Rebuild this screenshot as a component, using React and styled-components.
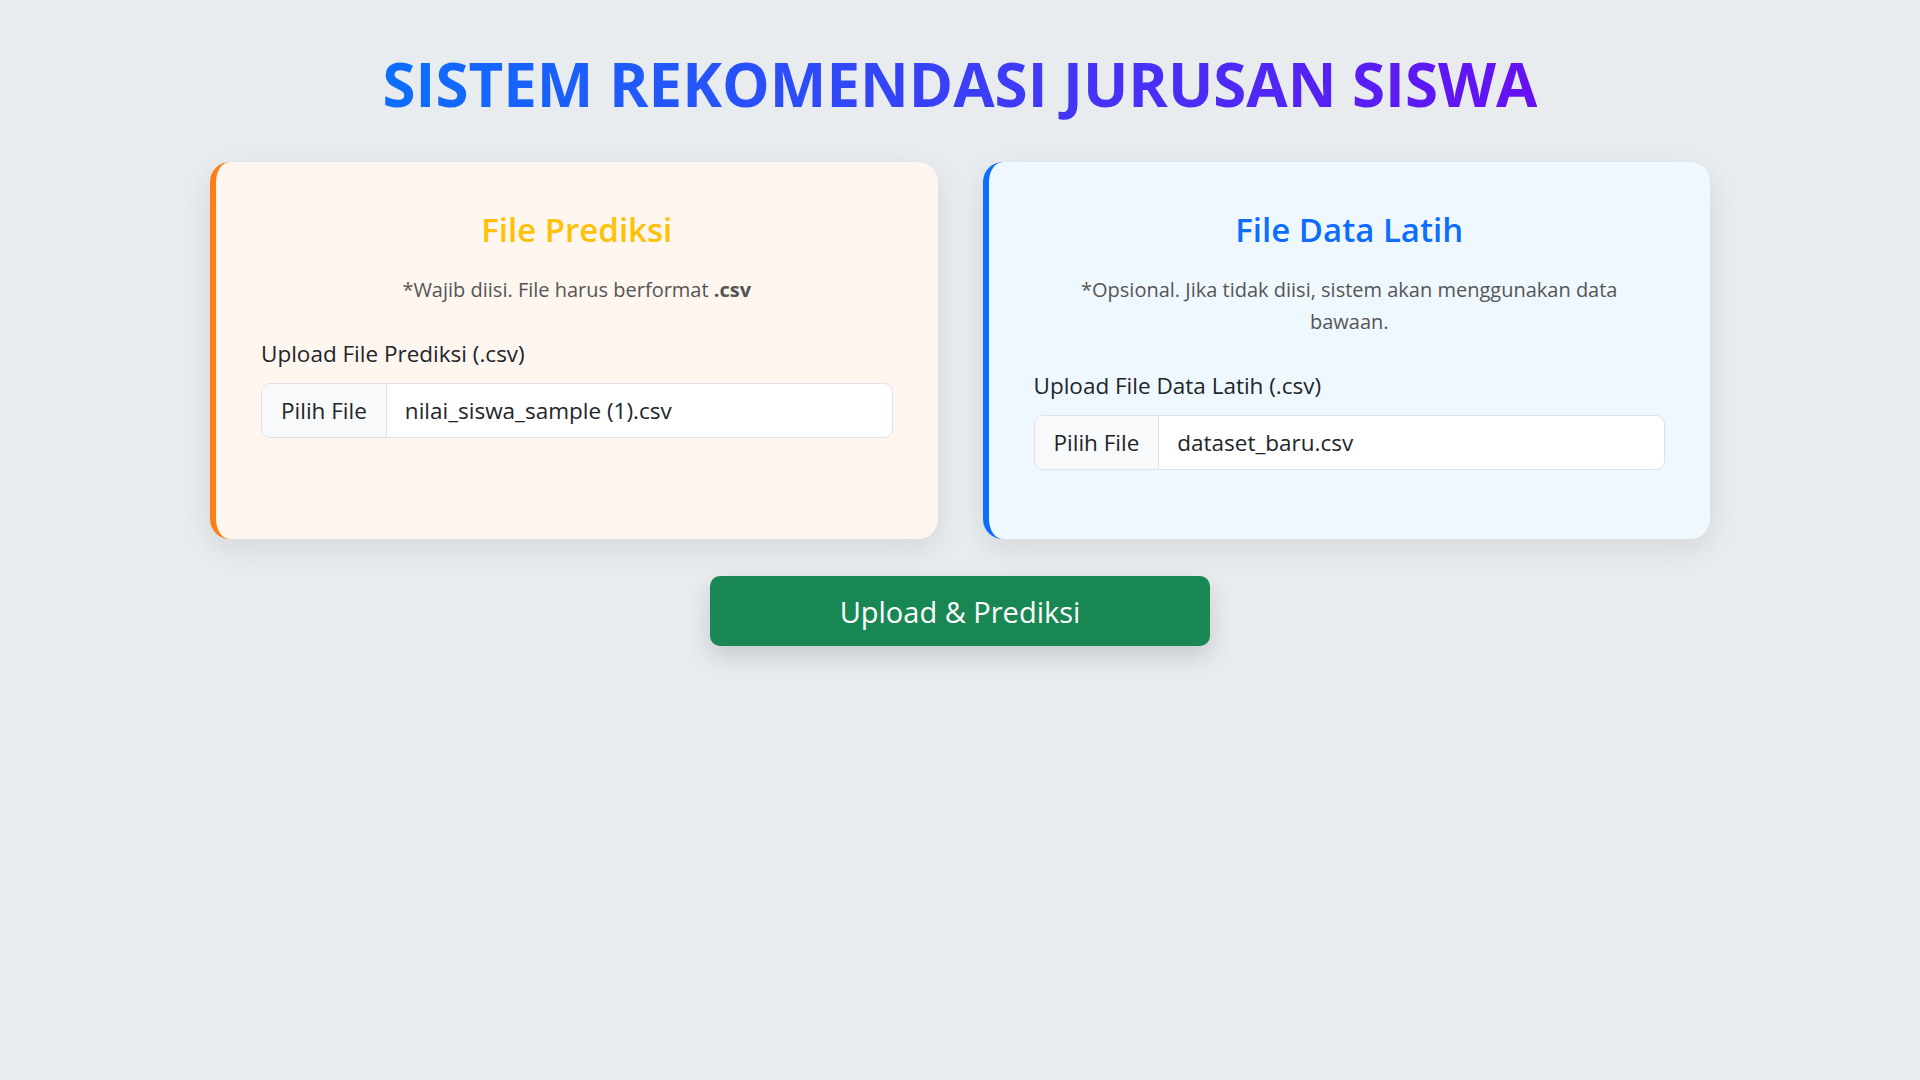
import React from 'react';
import styled, { createGlobalStyle } from 'styled-components';

const GlobalStyle = createGlobalStyle`
  body {
    margin: 0;
    background-color: #e9ecef;
    font-family: 'Open Sans', 'Noto Sans', sans-serif;
    color: #212529;
  }
`

const Page = styled.div`
  min-height: 100vh;
  display: flex;
  flex-direction: column;
  align-items: center;
  padding-top: 48px;
  box-sizing: border-box;
`
const Title = styled.h1`
  margin: 0 0 42px 0;
  font-size: 60px;
  line-height: 72px;
  font-weight: 700;
  background: linear-gradient(90deg, #0d6efd, #6610f2);
  -webkit-background-clip: text;
  background-clip: text;
  color: transparent;
`
const CardRow = styled.div`
  width: 1500px;
  display: flex;
  gap: 45px;
  align-items: stretch;
`
const Card = styled.section`
  flex: 1;
  box-sizing: border-box;
  padding: 47px 45px 69px 45px;
  background-color: ${props => props.bg};
  border-left: 6px solid ${props => props.accent};
  border-radius: 20px;
  box-shadow: 0 10px 30px rgba(0, 0, 0, 0.09);
  display: flex;
  flex-direction: column;
`
const CardTitle = styled.h3`
  margin: 0 0 23px 0;
  text-align: center;
  font-size: 33px;
  line-height: 42px;
  font-weight: 600;
  color: ${props => props.color};
`
const Note = styled.p`
  margin: 0 0 33px 0;
  padding: 0 ${props => props.inset || 0}px;
  text-align: center;
  font-size: 20px;
  line-height: 32px;
  color: #555;
  b {
    font-weight: 700;
  }
`
const Label = styled.label`
  display: block;
  margin-bottom: 14px;
  font-size: 22.5px;
  line-height: 30px;
`
const InputGroup = styled.div`
  display: flex;
  height: 55px;
  box-sizing: border-box;
  border: 1px solid #dee2e6;
  border-radius: 9px;
  background-color: #fff;
  overflow: hidden;
  font-size: 22.5px;
`
const FileButton = styled.span`
  display: flex;
  align-items: center;
  padding: 0 19px;
  background-color: #f8f9fa;
  border-right: 1px solid #dee2e6;
`
const FileName = styled.span`
  display: flex;
  align-items: center;
  padding: 0 18px;
`
const SubmitButton = styled.button`
  margin-top: 37px;
  width: 500px;
  height: 70px;
  border: none;
  border-radius: 10px;
  background-color: #198754;
  color: #fff;
  font-family: inherit;
  font-size: 29px;
  box-shadow: 0 10px 25px rgba(0, 0, 0, 0.15);
  cursor: pointer;
`

function UploadCard({ accent, bg, titleColor, title, note, noteInset, label, fileName }) {
  return (
    <Card accent={accent} bg={bg}>
      <CardTitle color={titleColor}>{title}</CardTitle>
      <Note inset={noteInset}>{note}</Note>
      <Label>{label}</Label>
      <InputGroup>
        <FileButton>Pilih File</FileButton>
        <FileName>{fileName}</FileName>
      </InputGroup>
    </Card>
  )
}

export default function App() {
  return (
    <>
      <GlobalStyle />
      <Page>
        <Title>SISTEM REKOMENDASI JURUSAN SISWA</Title>
        <CardRow>
          <UploadCard
            accent="#fd7e14"
            bg="#fff6f0"
            titleColor="#ffc107"
            title="File Prediksi"
            note={<>*Wajib diisi. File harus berformat <b>.csv</b></>}
            label="Upload File Prediksi (.csv)"
            fileName="nilai_siswa_sample (1).csv"
          />
          <UploadCard
            accent="#0d6efd"
            bg="#f0f8ff"
            titleColor="#0d6efd"
            title="File Data Latih"
            note="*Opsional. Jika tidak diisi, sistem akan menggunakan data bawaan."
            noteInset={20}
            label="Upload File Data Latih (.csv)"
            fileName="dataset_baru.csv"
          />
        </CardRow>
        <SubmitButton>Upload &amp; Prediksi</SubmitButton>
      </Page>
    </>
  )
}
